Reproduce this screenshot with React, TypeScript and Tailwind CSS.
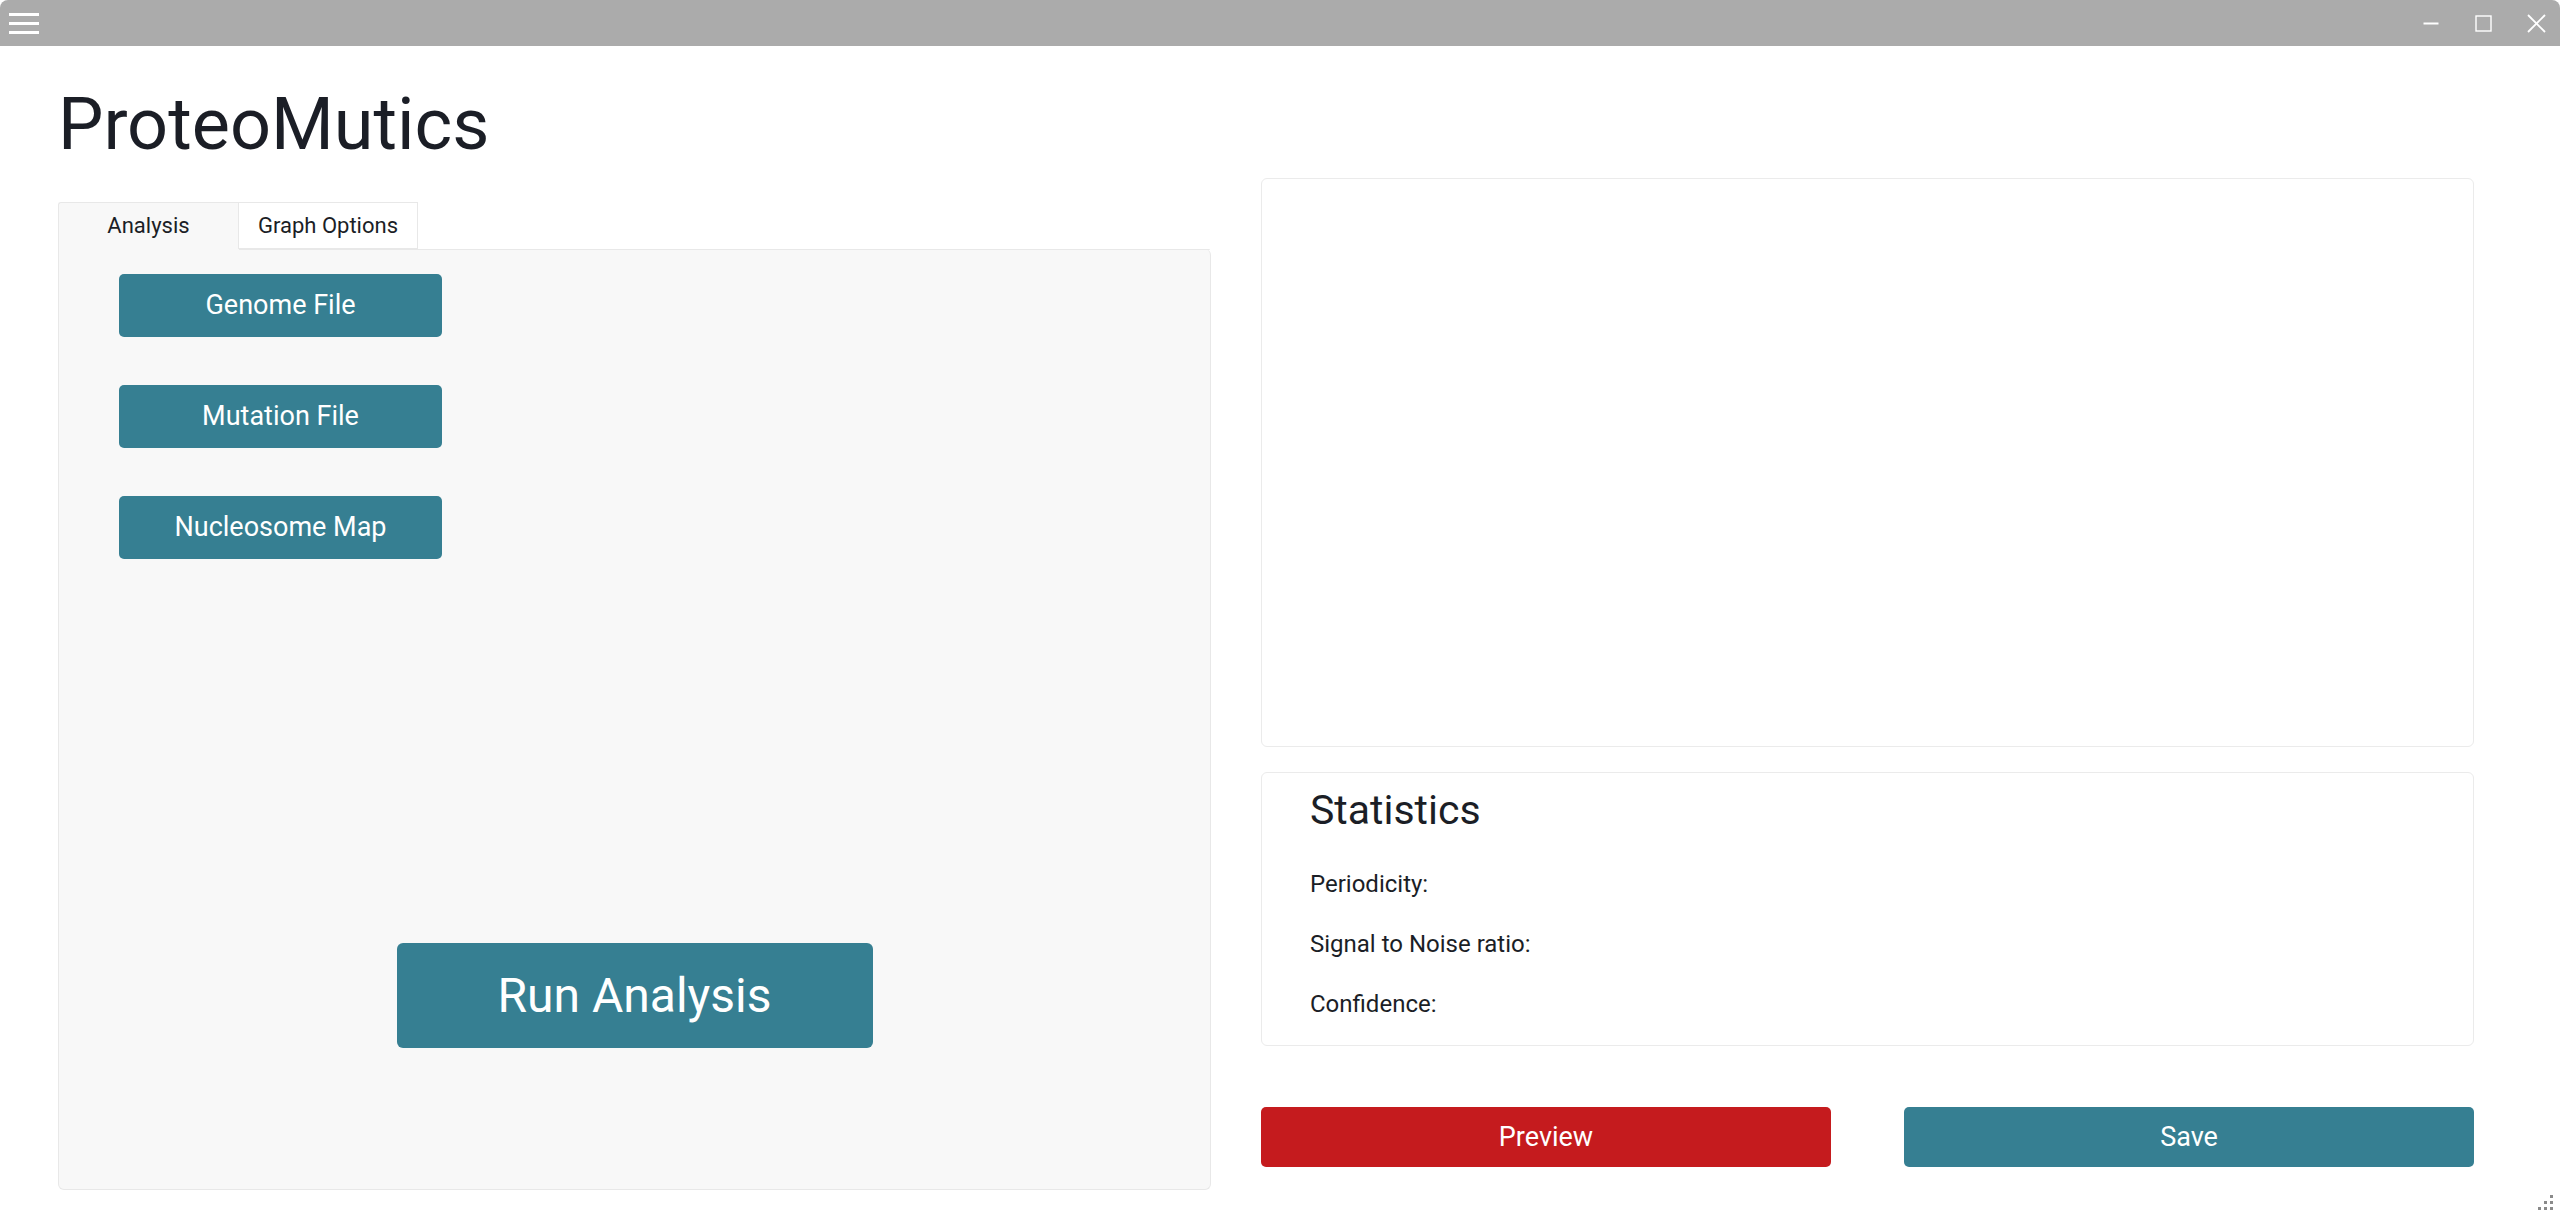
import React from "react";

const font = { fontFamily: "Roboto, 'Noto Sans', sans-serif" };

function TitleBar() {
  return (
    <div className="h-[46px] bg-[#ababab] flex items-center justify-between rounded-tl-[8px] rounded-tr-[8px]">
      <div className="pl-[9px] flex flex-col gap-[6px] pt-[1px]">
        <div className="w-[30px] h-[3px] bg-white" />
        <div className="w-[30px] h-[3px] bg-white" />
        <div className="w-[30px] h-[3px] bg-white" />
      </div>
      <div className="flex items-center pr-[14px]">
        <svg width="16" height="16" viewBox="0 0 16 16" className="mr-[36px]">
          <line x1="0.5" y1="8.5" x2="15.5" y2="8.5" stroke="white" strokeWidth="2" />
        </svg>
        <svg width="17" height="17" viewBox="0 0 17 17" className="mr-[35px]">
          <rect x="1" y="1" width="15" height="15" fill="none" stroke="white" strokeWidth="1.4" />
        </svg>
        <svg width="19" height="19" viewBox="0 0 19 19">
          <line x1="1" y1="1" x2="18" y2="18" stroke="white" strokeWidth="1.8" />
          <line x1="18" y1="1" x2="1" y2="18" stroke="white" strokeWidth="1.8" />
        </svg>
      </div>
    </div>
  );
}

function FileButton({ label }: { label: string }) {
  return (
    <button className="w-[323px] h-[63px] rounded-[5px] bg-[#367f92] text-white text-[27px] leading-none flex items-center justify-center">
      {label}
    </button>
  );
}

export default function App() {
  return (
    <div className="w-[2560px] h-[1215px] bg-white overflow-hidden flex flex-col relative text-[#1b1e26]" style={font}>
      <TitleBar />
      <div className="flex-1 flex pl-[58px]">
        {/* Left column */}
        <div className="w-[1153px] flex flex-col pt-[43px]">
          <h1 className="text-[72px] leading-[72px] font-normal">ProteoMutics</h1>
          <div className="mt-[41px] flex h-[47px]">
            <div className="w-[180px] h-[47px] bg-[#f8f8f8] border-l border-t border-[#e8e8e8] flex items-center justify-center text-[22px] leading-none rounded-tl-[3px]">
              Analysis
            </div>
            <div className="w-[180px] h-[47px] bg-white border border-[#e8e8e8] flex items-center justify-center text-[22px] leading-none">
              Graph Options
            </div>
            <div className="flex-1" />
          </div>
          <div className="h-[941px] bg-[#f8f8f8] border border-t-0 border-[#e8e8e8] rounded-b-[6px] rounded-tr-[6px] relative flex flex-col">
            <div className="absolute left-[180px] right-0 top-0 h-px bg-[#e8e8e8] rounded-tr-[6px]" />
            <div className="pt-[25px] pl-[60px] flex flex-col gap-[48px]">
              <FileButton label="Genome File" />
              <FileButton label="Mutation File" />
              <FileButton label="Nucleosome Map" />
            </div>
            <div className="flex justify-center mt-[384px]">
              <button className="w-[476px] h-[105px] rounded-[6px] bg-[#367f92] text-white text-[48px] leading-none flex items-center justify-center">
                Run Analysis
              </button>
            </div>
          </div>
        </div>
        {/* Right column */}
        <div className="w-[1213px] ml-[50px] flex flex-col pt-[132px]">
          <div className="h-[569px] bg-white border border-[#ebebeb] rounded-[6px]" />
          <div className="mt-[25px] h-[274px] bg-white border border-[#ebebeb] rounded-[6px] pl-[48px] pt-[17px] flex flex-col">
            <div className="text-[41px] leading-[41px]">Statistics</div>
            <div className="mt-[41px] flex flex-col gap-[36px] text-[24px] leading-[24px]">
              <div>Periodicity:</div>
              <div>Signal to Noise ratio:</div>
              <div>Confidence:</div>
            </div>
          </div>
          <div className="mt-[61px] flex justify-between">
            <button className="w-[570px] h-[60px] rounded-[5px] bg-[#c51b1e] text-white text-[27px] leading-none flex items-center justify-center">
              Preview
            </button>
            <button className="w-[570px] h-[60px] rounded-[5px] bg-[#367f92] text-white text-[27px] leading-none flex items-center justify-center">
              Save
            </button>
          </div>
        </div>
      </div>
      {/* resize grip */}
      <div className="absolute right-[7px] bottom-[5px] grid grid-cols-3 gap-[3px]">
        <span className="w-[3px] h-[3px]" />
        <span className="w-[3px] h-[3px]" />
        <span className="w-[3px] h-[3px] bg-[#8a8a8a]" />
        <span className="w-[3px] h-[3px]" />
        <span className="w-[3px] h-[3px] bg-[#8a8a8a]" />
        <span className="w-[3px] h-[3px] bg-[#8a8a8a]" />
        <span className="w-[3px] h-[3px] bg-[#8a8a8a]" />
        <span className="w-[3px] h-[3px] bg-[#8a8a8a]" />
        <span className="w-[3px] h-[3px] bg-[#8a8a8a]" />
      </div>
    </div>
  );
}
